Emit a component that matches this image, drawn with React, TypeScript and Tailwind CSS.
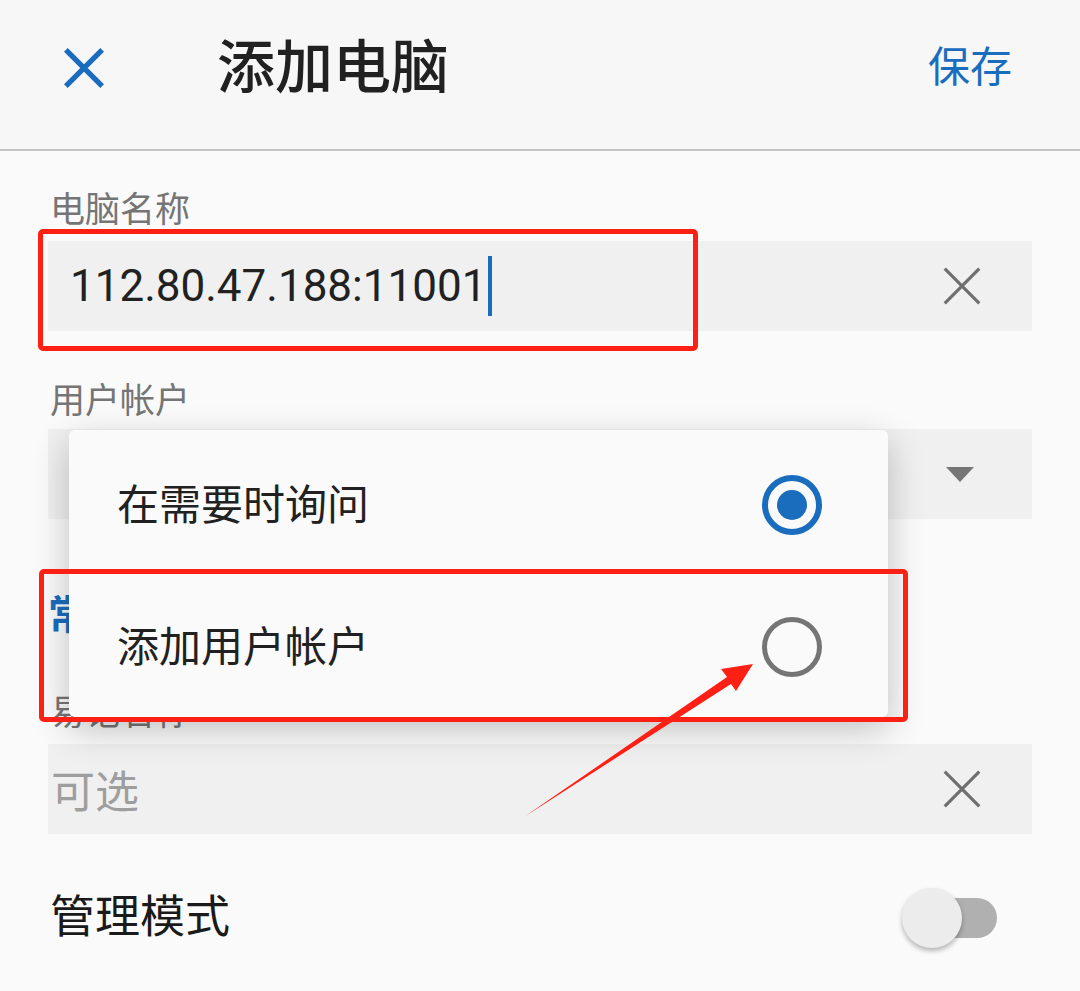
import React from "react";

const font = "font-['Roboto','Noto_Sans_CJK_SC',sans-serif]";

function CloseIcon({ className, stroke = 5 }: { className?: string; stroke?: number }) {
  return (
    <svg viewBox="0 0 44 44" className={className} fill="none" stroke="currentColor" strokeWidth={stroke}>
      <path d="M3 3 L41 41 M41 3 L3 41" />
    </svg>
  );
}

function Field({ label, children, labelTop, fieldTop }: { label: string; children: React.ReactNode; labelTop: string; fieldTop: string }) {
  return (
    <>
      <div className={`${labelTop} h-[40px] leading-[40px] pl-[2px] text-[35px] text-[#757575]`}>{label}</div>
      <div className={`${fieldTop} h-[90px] bg-[#f0f0f0] flex items-center`}>{children}</div>
    </>
  );
}

export default function App() {
  return (
    <div className={`relative w-[1080px] h-[991px] overflow-hidden bg-[#fafafa] ${font}`}>
      {/* header */}
      <div className="h-[151px] bg-[#f7f7f7] border-b-[2px] border-[#c4c4c4] flex items-center pb-[14px]">
        <CloseIcon className="ml-[63px] w-[42px] h-[42px] text-[#1a6dbd]" stroke={5.5} />
        <div className="ml-[112px] text-[58px] leading-none text-[#212121] font-medium">添加电脑</div>
        <div className="ml-auto mr-[68px] text-[42px] leading-none text-[#1a6dbd]">保存</div>
      </div>

      {/* form */}
      <div className="px-[48px]">
        <Field label="电脑名称" labelTop="mt-[40px]" fieldTop="mt-[10px]">
          <div className="pl-[22px] text-[44px] text-[#212121] flex items-center">
            112.80.47.188:11001
            <span className="ml-[2px] w-[4px] h-[60px] bg-[#1a6dbd]" />
          </div>
          <CloseIcon className="ml-auto mr-[50px] w-[40px] h-[40px] text-[#6f6f6f]" stroke={3.5} />
        </Field>

        <Field label="用户帐户" labelTop="mt-[51px]" fieldTop="mt-[7px]">
          <svg viewBox="0 0 28 15" className="ml-auto mr-[58px] w-[28px] h-[15px] text-[#757575]" fill="currentColor">
            <path d="M0 0 H28 L14 15 Z" />
          </svg>
        </Field>

        <div className="mt-[77px] h-[40px] leading-[40px] text-[40px] font-bold text-[#1a6dbd]">常规</div>

        <Field label="易记名称" labelTop="mt-[58px]" fieldTop="mt-[10px]">
          <div className="pl-[3px] pt-[8px] text-[44px] text-[#9e9e9e]">可选</div>
          <CloseIcon className="ml-auto mr-[50px] w-[40px] h-[40px] text-[#6f6f6f]" stroke={3.5} />
        </Field>

        <div className="mt-[34px] h-[100px] flex items-center justify-between">
          <div className="pl-[2px] text-[45px] text-[#1a1a1a]">管理模式</div>
          <div className="relative mr-[35px] w-[95px] h-[60px]">
            <div className="absolute left-[18px] top-[10px] w-[77px] h-[40px] rounded-full bg-[#b0b0b0]" />
            <div className="absolute left-0 top-0 w-[60px] h-[60px] rounded-full bg-[#ececec] shadow-[0_3px_5px_rgba(0,0,0,0.28)]" />
          </div>
        </div>
      </div>

      {/* dropdown menu over the form */}
      <div className="absolute left-[69px] top-[430px] w-[819px] h-[287px] rounded-[6px] bg-[#fafafa] shadow-[0_12px_36px_rgba(0,0,0,0.24)] pt-[4px] overflow-hidden">
        <div className="h-[142px] flex items-center pl-[48px] pr-[66px]">
          <span className="text-[42px] text-[#212121]">在需要时询问</span>
          <span className="ml-auto w-[60px] h-[60px] rounded-full border-[6px] border-[#1a6dbd] flex items-center justify-center">
            <span className="w-[30px] h-[30px] rounded-full bg-[#1a6dbd]" />
          </span>
        </div>
        <div className="h-[142px] flex items-center pl-[48px] pr-[66px]">
          <span className="text-[42px] text-[#212121]">添加用户帐户</span>
          <span className="ml-auto w-[60px] h-[60px] rounded-full border-[5px] border-[#757575]" />
        </div>
      </div>

      {/* annotations */}
      <div className="absolute left-[38px] top-[229px] w-[660px] h-[122px] border-[5px] border-[#fe2014] rounded-[5px] pointer-events-none" />
      <div className="absolute left-[39px] top-[569px] w-[869px] h-[153px] border-[5px] border-[#fe2014] rounded-[5px] pointer-events-none" />
      <svg className="absolute left-0 top-0 w-[1080px] h-[991px] pointer-events-none" viewBox="0 0 1080 991">
        <polygon
          points="524,817 727,677 721,669 753,664 736,691 731,684"
          fill="#fe2014"
        />
      </svg>
    </div>
  );
}
